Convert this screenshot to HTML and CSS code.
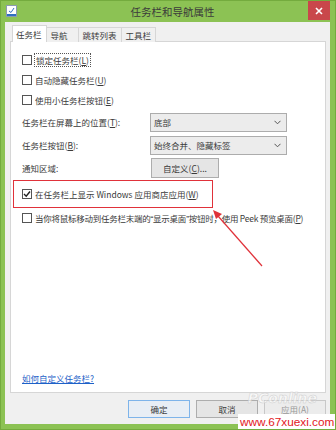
FILE: index.html
```html
<!DOCTYPE html>
<html lang="zh-CN">
  <head>
    <meta charset="UTF-8" />
    <title>任务栏和导航属性</title>
    <link rel="stylesheet" href="styles.css">
  </head>
  <body>
    <div class="window">
      <div class="titlebar">
        <svg class="app-icon" width="11" height="12" viewBox="0 0 11 12">
          <rect x="0.5" y="0.5" width="10" height="11" fill="#fff" stroke="#8a9bb0"/>
          <rect x="1" y="9" width="9" height="2" fill="#2f6fc1"/>
          <path d="M3 6 L5 7.5 L8 3" fill="none" stroke="#2f6fc1" stroke-width="1"/>
        </svg>
        <div class="title">任务栏和导航属性</div>
        <div class="close">
          <svg width="8" height="8" viewBox="0 0 8 8">
            <path d="M1 1 L7 7 M7 1 L1 7" stroke="#fff" stroke-width="1.6"/>
          </svg>
        </div>
      </div>

      <div class="client">
        <div class="tabs">
          <div class="tab active">任务栏</div>
          <div class="tab">导航</div>
          <div class="tab">跳转列表</div>
          <div class="tab">工具栏</div>
        </div>

        <div class="panel">
          <div class="check-row">
            <span class="box"></span>
            <span class="focus">锁定任务栏(<u>L</u>)</span>
          </div>
          <div class="check-row">
            <span class="box"></span>
            <span>自动隐藏任务栏(<u>U</u>)</span>
          </div>
          <div class="check-row">
            <span class="box"></span>
            <span>使用小任务栏按钮(<u>E</u>)</span>
          </div>

          <div class="field-row first">
            <span class="field-label">任务栏在屏幕上的位置(<u>T</u>):</span>
            <div class="select">
              <span>底部</span>
              <svg width="7" height="5" viewBox="0 0 7 5"><path d="M0.5 0.8 L3.5 3.8 L6.5 0.8" fill="none" stroke="#555" stroke-width="1"/></svg>
            </div>
          </div>
          <div class="field-row second">
            <span class="field-label">任务栏按钮(<u>B</u>):</span>
            <div class="select">
              <span>始终合并、隐藏标签</span>
              <svg width="7" height="5" viewBox="0 0 7 5"><path d="M0.5 0.8 L3.5 3.8 L6.5 0.8" fill="none" stroke="#555" stroke-width="1"/></svg>
            </div>
          </div>
          <div class="field-row third">
            <span class="field-label">通知区域:</span>
            <div class="btn custom">自定义(<u>C</u>)...</div>
          </div>

          <div class="check-row highlight">
            <span class="box checked">
              <svg width="8" height="8" viewBox="0 0 8 8"><path d="M1 4 L3.2 6.2 L7 1.5" fill="none" stroke="#222" stroke-width="1.4"/></svg>
            </span>
            <span>在任务栏上显示 Windows 应用商店应用(<u>W</u>)</span>
          </div>
          <div class="check-row peek">
            <span class="box"></span>
            <span class="peek-text">当你将鼠标移动到任务栏末端的<span class="q">“</span>显示桌面<span class="q">”</span>按钮时，使用 Peek 预览桌面(<u>P</u>)</span>
          </div>

          <a class="help-link" href="#">如何自定义任务栏?</a>
        </div>

        <div class="buttons">
          <div class="btn default">确定</div>
          <div class="btn">取消</div>
          <div class="btn disabled">应用(<u>A</u>)</div>
        </div>
      </div>

      <svg class="arrow" width="336" height="430" viewBox="0 0 336 430">
        <path d="M262 266 L218 216" stroke="#e0323a" stroke-width="1.2" fill="none"/>
        <path d="M213 210 L222 214 L216 219 Z" fill="#e0323a"/>
      </svg>

      <div class="mark-logo">PConline</div>
      <div class="mark-url">www.67xuexi.com</div>
    </div>
  </body>
</html>
```

FILE: styles.css
```css
* {
  box-sizing: border-box;
}
body {
  margin: 0;
  font-family: "Noto Sans CJK SC", "Noto Sans", sans-serif;
  font-size: 8.5px;
  color: #3a3a3a;
}
u {
  text-decoration: underline;
}
.window {
  position: relative;
  width: 336px;
  height: 430px;
  background: #8cc254;
  border: 1px solid #74ab3e;
  display: flex;
  flex-direction: column;
  overflow: hidden;
}
.titlebar {
  height: 21px;
  display: flex;
  align-items: center;
  padding-left: 5px;
  flex-shrink: 0;
}
.app-icon {
  margin-top: -2px;
}
.title {
  flex: 1;
  text-align: center;
  font-size: 10.5px;
  color: #3b3b3b;
  padding-left: 20px;
}
.close {
  width: 22px;
  height: 19px;
  margin-top: -2px;
  margin-right: 5px;
  background: #c9474b;
  display: flex;
  align-items: center;
  justify-content: center;
}
.client {
  flex: 1;
  margin: 0 5px 5px 4px;
  background: #f0f0f0;
  padding: 3px 4px 0 5px;
  display: flex;
  flex-direction: column;
}
.tabs {
  display: flex;
  align-items: flex-end;
  height: 17px;
  padding-left: 2px;
  margin-bottom: -1px;
  position: relative;
  z-index: 1;
}
.tab {
  height: 15px;
  padding: 0 4px;
  border: 1px solid #d6d6d6;
  border-bottom: none;
  margin-right: -1px;
  background: #f0f0f0;
  line-height: 13px;
  font-size: 8.5px;
  display: flex;
  align-items: center;
}
.tab:nth-child(2) {
  padding-right: 10px;
}
.tab.active {
  height: 17px;
  background: #fff;
  padding: 0 4px 0 3px;
}
.panel {
  height: 352px;
  background: #fff;
  border: 1px solid #d6d6d6;
  padding: 8px 0 7px 11px;
  display: flex;
  flex-direction: column;
}
.check-row {
  height: 20px;
  display: flex;
  align-items: center;
  gap: 3px;
}
.box {
  width: 10px;
  height: 10px;
  border: 1px solid #555;
  background: #fff;
  display: flex;
  align-items: center;
  justify-content: center;
  flex-shrink: 0;
}
.focus {
  outline: 1px dotted #555;
  padding: 0 1px;
}
.field-row {
  display: flex;
  align-items: center;
  height: 20px;
}
.field-row.first {
  margin-top: 2px;
}
.field-row.second {
  margin-top: 3px;
}
.field-row.third {
  margin-top: 2px;
  height: 21px;
}
.field-label {
  width: 128px;
}
.select {
  width: 137px;
  height: 19px;
  border: 1px solid #acacac;
  background: #ececec;
  display: flex;
  align-items: center;
  justify-content: space-between;
  padding: 0 5px 0 3px;
}
.btn {
  height: 20px;
  border: 1px solid #adadad;
  background: #e5e5e5;
  display: flex;
  align-items: center;
  justify-content: center;
}
.custom {
  width: 68px;
  margin-left: 1px;
}
.check-row.highlight {
  margin-top: 2px;
  height: 28px;
  width: 200px;
  margin-left: -9px;
  padding-left: 8px;
  border: 1.5px solid #e0323a;
}
.check-row.peek {
  margin-top: 0;
}
.peek-text {
  white-space: nowrap;
  letter-spacing: -0.25px;
}
.q {
  font-family: "Liberation Sans", sans-serif;
}
.help-link {
  margin-top: auto;
  color: #1d61c8;
  text-decoration: underline;
  font-size: 8.5px;
  line-height: 14px;
}
.buttons {
  display: flex;
  justify-content: flex-end;
  gap: 6px;
  padding: 7px 0 0 0;
}
.buttons .btn {
  width: 62px;
  height: 18px;
}
.btn.default {
  border-color: #7eb4ea;
  background: #e8eef5;
}
.btn.disabled {
  color: #9a9a9a;
  background: #ececec;
  border-color: #c8c8c8;
}
.arrow {
  position: absolute;
  left: -1px;
  top: -1px;
  pointer-events: none;
}
.mark-logo {
  position: absolute;
  right: 18px;
  top: 389px;
  font-family: "DejaVu Sans", sans-serif;
  font-size: 14px;
  font-style: italic;
  font-weight: bold;
  color: rgba(255, 255, 255, 0.6);
  -webkit-text-stroke: 0.5px #cfcfcf;
}
.mark-url {
  position: absolute;
  right: -1px;
  bottom: -1px;
  width: 98px;
  height: 16px;
  background: #fff;
  color: #e3161d;
  font-family: "Liberation Sans", sans-serif;
  font-size: 11.8px;
  line-height: 16px;
  padding-left: 2px;
  white-space: nowrap;
}
```
